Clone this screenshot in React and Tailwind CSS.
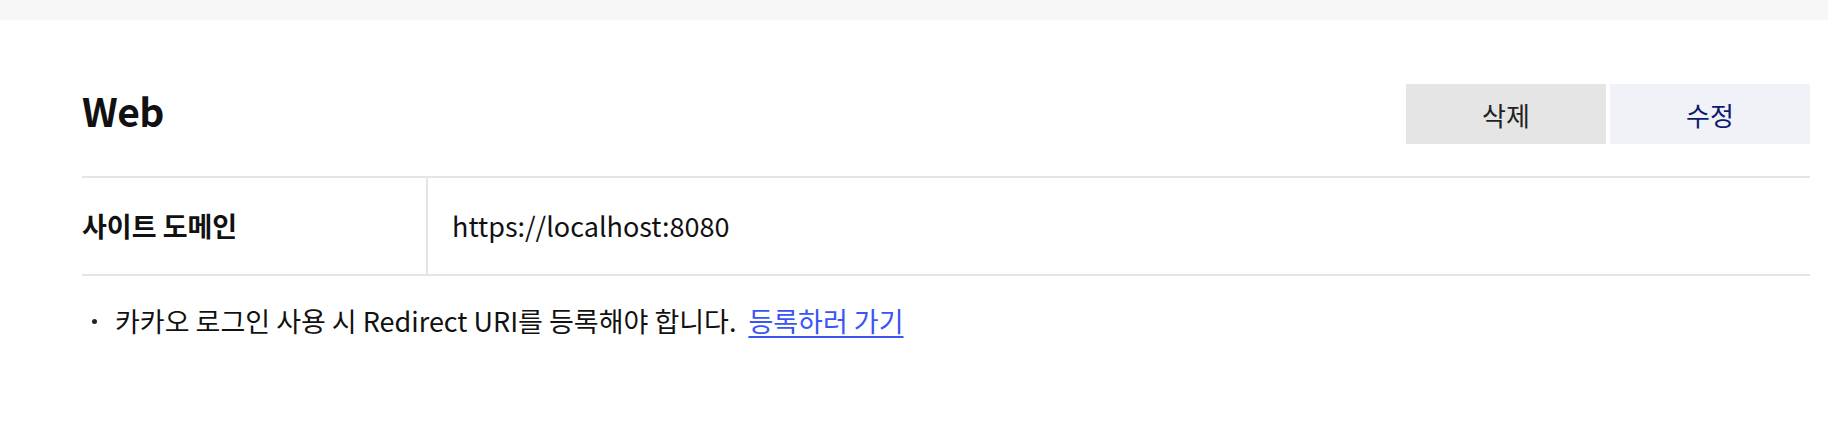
export default function App() {
  const font = { fontFamily: '"Noto Sans CJK KR", "Noto Sans", sans-serif' };
  return (
    <div className="w-[1828px] h-[422px] bg-white text-[#111111]" style={font}>
      <div className="h-[20px] bg-[#f6f7f6]" />
      <div className="pl-[82px] pr-[18px]">
        <div className="mt-[64px] flex items-center justify-between h-[60px]">
          <h2 className="text-[39px] font-bold leading-none tracking-[-0.5px] mb-[8px]">Web</h2>
          <div className="flex gap-[4px]">
            <button className="w-[200px] h-[60px] bg-[#e5e5e5] text-[26px] text-[#222222]">삭제</button>
            <button className="w-[200px] h-[60px] bg-[#f1f2f8] text-[26px] text-[#0b1b6f]">수정</button>
          </div>
        </div>
        <div className="mt-[32px] border-t-2 border-b-2 border-[#e5e5e5] flex h-[100px]">
          <div className="w-[346px] border-r-2 border-[#e5e5e5] flex items-center text-[27px] font-bold">
            사이트 도메인
          </div>
          <div className="flex items-center pl-[24px] text-[27px]">https://localhost:8080</div>
        </div>
        <div className="mt-[27px] flex items-center h-[36px] text-[27px] leading-[36px]">
          <span className="ml-[10px] w-[5px] h-[5px] rounded-full bg-[#222222]" />
          <span className="ml-[18px]">카카오 로그인 사용 시 Redirect URI를 등록해야 합니다.</span>
          <a href="#" className="ml-[12px] text-[#3a55f6] underline underline-offset-[4px]">등록하러 가기</a>
        </div>
      </div>
    </div>
  );
}
